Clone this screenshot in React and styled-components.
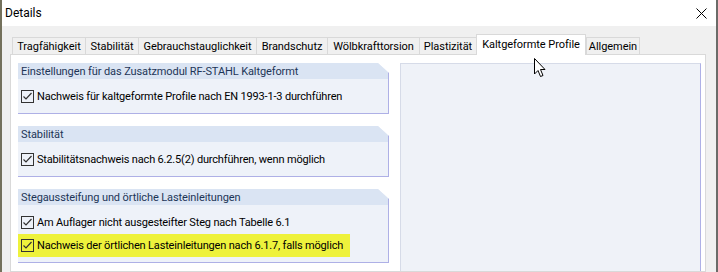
import React from "react";
import styled, { createGlobalStyle } from "styled-components";

const Global = createGlobalStyle`
  html, body { margin: 0; padding: 0; background: #6f6d5c; }
  body { font-family: "Roboto", "Liberation Sans", sans-serif; }
  * { box-sizing: border-box; }
`;

const Window = styled.div`
  position: relative;
  width: 718px;
  height: 272px;
  overflow: hidden;
  display: flex;
  flex-direction: column;
  border-left: 2px solid #74715c;
  border-right: 2px solid #6b6b68;
  background: #f0f0f0;
`;

const TitleBar = styled.div`
  height: 26px;
  flex: none;
  background: #ffffff;
  display: flex;
  align-items: center;
  justify-content: space-between;
  padding: 0 9px 0 3px;
  font-size: 12px;
  color: #000;
`;

const CloseButton = styled.div`
  width: 12px;
  height: 12px;
  display: flex;
  align-items: center;
  justify-content: center;
`;

const Content = styled.div`
  flex: 1;
  display: flex;
  flex-direction: column;
  padding: 8px 10px 0 8px;
  min-height: 0;
`;

const TabStrip = styled.div`
  display: flex;
  align-items: flex-end;
  height: 20px;
  padding-left: 2px;
  flex: none;
  position: relative;
  z-index: 1;
`;

const Tab = styled.div`
  width: ${(p) => p.$w}px;
  height: ${(p) => (p.$active ? 21 : 17)}px;
  margin-bottom: ${(p) => (p.$active ? -1 : 0)}px;
  background: ${(p) => (p.$active ? "#ffffff" : "#f0f0f0")};
  border-top: 1px solid #d9d9d9;
  border-left: 1px solid #d9d9d9;
  border-right: ${(p) => (p.$active || p.$last ? "1px solid #d9d9d9" : "none")};
  display: flex;
  align-items: center;
  justify-content: center;
  padding-bottom: ${(p) => (p.$active ? 2 : 0)}px;
  font-size: 11px;
  letter-spacing: -0.05px;
  color: #000;
  white-space: nowrap;
`;

const Page = styled.div`
  flex: 1;
  background: #ffffff;
  border: 1px solid #d9d9d9;
  display: flex;
  padding: 8px 5px 0 7px;
  min-height: 0;
`;

const LeftColumn = styled.div`
  width: 371px;
  flex: none;
  display: flex;
  flex-direction: column;
  gap: 12px;
`;

const Group = styled.div`
  background: #eef2f9;
  border-right: 1px solid #aeb0e6;
  border-bottom: 1px solid #aeb0e6;
  clip-path: polygon(0 0, calc(100% - 11px) 0, 100% 10px, 100% 100%, 0 100%);
`;

const GroupHeader = styled.div`
  height: 16px;
  background: #dae4f3;
  display: flex;
  align-items: center;
  padding-left: 3px;
  font-size: 11px;
  letter-spacing: -0.1px;
  color: #1d3557;
  white-space: nowrap;
`;

const GroupBody = styled.div`
  padding: 6px 0 5px 0;
  display: flex;
  flex-direction: column;
`;

const Row = styled.div`
  height: 23px;
  display: flex;
  align-items: center;
  gap: 3px;
  align-self: flex-start;
  margin-left: ${(p) => (p.$marked ? -5 : 0)}px;
  padding: 0 ${(p) => (p.$marked ? 7 : 0)}px 0 ${(p) => (p.$marked ? 8 : 3)}px;
  background: ${(p) => (p.$marked ? "#eef23c" : "transparent")};
  font-size: 11px;
  letter-spacing: -0.17px;
  color: #000;
  white-space: nowrap;
`;

const Box = styled.span`
  width: 13px;
  height: 13px;
  flex: none;
  border: 1px solid #333333;
  display: flex;
  align-items: center;
  justify-content: center;
`;

const Preview = styled.div`
  width: 301px;
  margin-left: 11px;
  flex: none;
  background: #eff2f8;
  border-top: 1px solid #d6dbe8;
  border-left: 1px solid #d6dbe8;
  border-right: 1px solid #aeb0e6;
`;

const Cursor = styled.svg`
  position: absolute;
  left: 531px;
  top: 57px;
  z-index: 5;
`;

function Check({ label, marked }) {
  return (
    <Row $marked={marked}>
      <Box>
        <svg width="11" height="11" viewBox="0 0 11 11">
          <polyline points="1.5,5.5 4,8 9.5,2" fill="none" stroke="#333" strokeWidth="1.2" />
        </svg>
      </Box>
      {label}
    </Row>
  );
}

const tabs = [
  ["Tragfähigkeit", 73],
  ["Stabilität", 53],
  ["Gebrauchstauglichkeit", 118],
  ["Brandschutz", 71],
  ["Wölbkrafttorsion", 92],
  ["Plastizität", 57],
  ["Kaltgeformte Profile", 110, true],
  ["Allgemein", 54],
];

export default function App() {
  return (
    <>
      <Global />
      <Window>
        <TitleBar>
          <span>Details</span>
          <CloseButton>
            <svg width="11" height="11" viewBox="0 0 11 11">
              <path d="M0.5 0.5 L10.5 10.5 M10.5 0.5 L0.5 10.5" stroke="#000" strokeWidth="1" />
            </svg>
          </CloseButton>
        </TitleBar>
        <Content>
          <TabStrip>
            {tabs.map(([t, w, a], i) => (
              <Tab key={t} $w={w} $active={a} $last={i === tabs.length - 1}>
                {t}
              </Tab>
            ))}
          </TabStrip>
          <Page>
            <LeftColumn>
              <Group>
                <GroupHeader>Einstellungen für das Zusatzmodul RF-STAHL Kaltgeformt</GroupHeader>
                <GroupBody>
                  <Check label="Nachweis für kaltgeformte Profile nach EN 1993-1-3 durchführen" />
                </GroupBody>
              </Group>
              <Group>
                <GroupHeader>Stabilität</GroupHeader>
                <GroupBody>
                  <Check label="Stabilitätsnachweis nach 6.2.5(2) durchführen, wenn möglich" />
                </GroupBody>
              </Group>
              <Group>
                <GroupHeader>Stegaussteifung und örtliche Lasteinleitungen</GroupHeader>
                <GroupBody>
                  <Check label="Am Auflager nicht ausgesteifter Steg nach Tabelle 6.1" />
                  <Check marked label="Nachweis der örtlichen Lasteinleitungen nach 6.1.7, falls möglich" />
                </GroupBody>
              </Group>
            </LeftColumn>
            <Preview />
          </Page>
        </Content>
        <Cursor width="14" height="21" viewBox="0 0 14 21">
          <path d="M1.5 1.5 L1.5 17 L5 13.5 L7.5 19.5 L10 18.5 L7.5 12.5 L12 12.5 Z" fill="#fff" stroke="#000" strokeWidth="1" strokeLinejoin="miter" />
        </Cursor>
      </Window>
    </>
  );
}
